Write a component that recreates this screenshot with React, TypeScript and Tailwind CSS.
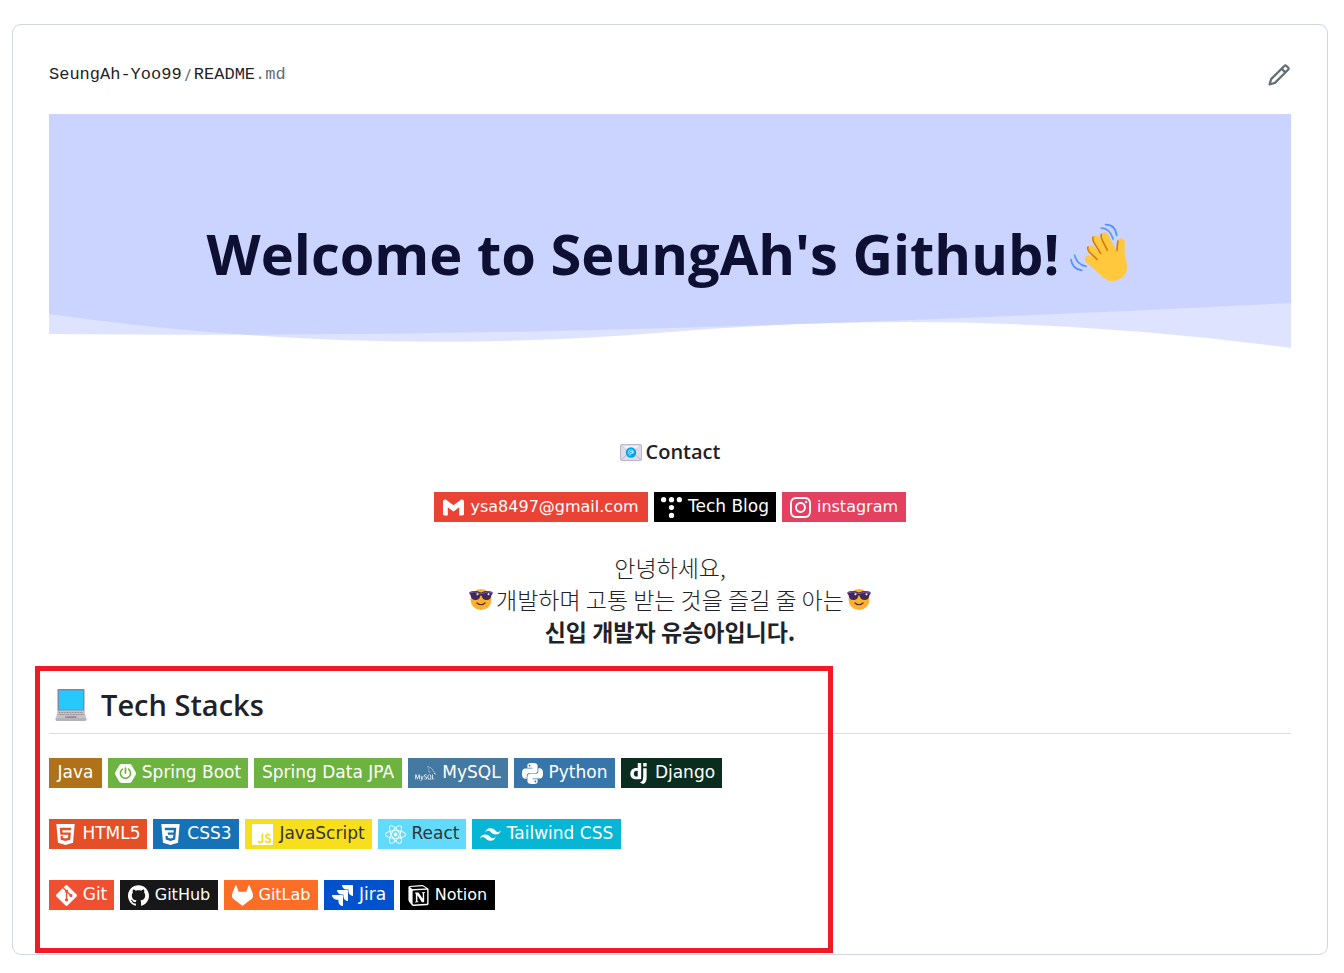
import type { ReactNode } from "react";
import {
  SiDjango,
  SiGit,
  SiGithub,
  SiGitlab,
  SiGmail,
  SiHtml5,
  SiInstagram,
  SiJavascript,
  SiJira,
  SiMysql,
  SiNotion,
  SiPython,
  SiReact,
  SiSpringboot,
  SiTailwindcss
} from "react-icons/si";

type BadgeItem = {
  label: string;
  href: string;
  style: string;
  icon?: ReactNode;
};

const contacts: BadgeItem[] = [
  { label: "ysa8497@gmail.com", href: "mailto:ysa8497@gmail.com", style: "w-[214px] bg-[#ea4335] text-base text-white", icon: <SiGmail /> },
  { label: "Tech Blog", href: "#blog", style: "w-[122px] bg-black text-[17px] text-white", icon: <TistoryIcon /> },
  { label: "instagram", href: "#instagram", style: "w-[124px] bg-[#e4405f] text-base text-white", icon: <SiInstagram /> }
];

const stacks: BadgeItem[][] = [
  [
    { label: "Java", href: "#java", style: "w-[53px] bg-[#b07219] text-[17px] text-white" },
    { label: "Spring Boot", href: "#spring-boot", style: "w-[140px] bg-[#6db33f] text-[17px] text-white", icon: <SiSpringboot /> },
    { label: "Spring Data JPA", href: "#jpa", style: "w-[148px] bg-[#6db33f] text-[17px] text-white" },
    { label: "MySQL", href: "#mysql", style: "w-[100px] bg-[#4479a1] text-[17px] text-white", icon: <SiMysql /> },
    { label: "Python", href: "#python", style: "w-[101px] bg-[#3776ab] text-[17px] text-white", icon: <SiPython /> },
    { label: "Django", href: "#django", style: "w-[101px] bg-[#092e20] text-[17px] text-white", icon: <SiDjango /> }
  ],
  [
    { label: "HTML5", href: "#html5", style: "w-[98px] bg-[#e34f26] text-[17px] text-white", icon: <SiHtml5 /> },
    { label: "CSS3", href: "#css3", style: "w-[86px] bg-[#1572b6] text-[17px] text-white", icon: <Css3Icon /> },
    { label: "JavaScript", href: "#javascript", style: "w-[127px] bg-[#f7df1e] text-[17px] text-[#333333]", icon: <SiJavascript /> },
    { label: "React", href: "#react", style: "w-[88px] bg-[#61dafb] text-[17px] text-[#333333]", icon: <SiReact /> },
    { label: "Tailwind CSS", href: "#tailwind", style: "w-[149px] bg-[#06b6d4] text-[17px] text-white", icon: <SiTailwindcss /> }
  ],
  [
    { label: "Git", href: "#git", style: "w-[65px] bg-[#f05032] text-[17px] text-white", icon: <SiGit /> },
    { label: "GitHub", href: "#github", style: "w-[98px] bg-[#181717] text-base text-white", icon: <SiGithub /> },
    { label: "GitLab", href: "#gitlab", style: "w-[94px] bg-[#fc6d26] text-base text-white", icon: <SiGitlab /> },
    { label: "Jira", href: "#jira", style: "w-[70px] bg-[#0052cc] text-[17px] text-white", icon: <SiJira /> },
    { label: "Notion", href: "#notion", style: "w-[95px] bg-black text-base text-white", icon: <SiNotion /> }
  ]
];

function PencilIcon() {
  return (
    <svg viewBox="0 0 16 16" fill="currentColor" className="size-6">
      <path d="M11.013 1.427a1.75 1.75 0 0 1 2.474 0l1.086 1.086a1.75 1.75 0 0 1 0 2.474l-8.61 8.61c-.21.21-.47.364-.756.445l-3.251.93a.75.75 0 0 1-.927-.928l.929-3.25c.081-.286.235-.547.445-.758l8.61-8.61Zm.176 4.823L9.75 4.81l-6.286 6.287a.253.253 0 0 0-.064.108l-.558 1.953 1.953-.558a.253.253 0 0 0 .108-.064Zm1.238-3.763a.25.25 0 0 0-.354 0L10.811 3.75l1.439 1.44 1.263-1.263a.25.25 0 0 0 0-.354Z" />
    </svg>
  );
}

function TistoryIcon() {
  return (
    <svg viewBox="0 0 24 24" fill="currentColor" width="1em" height="1em">
      <circle cx="3" cy="3" r="3" />
      <circle cx="12" cy="3" r="3" />
      <circle cx="21" cy="3" r="3" />
      <circle cx="12" cy="12" r="3" />
      <circle cx="12" cy="21" r="3" />
    </svg>
  );
}

function Css3Icon() {
  return (
    <svg viewBox="0 0 24 24" fill="currentColor" width="1em" height="1em">
      <path d="M1.5 0h21l-1.91 21.563L11.977 24l-8.565-2.438L1.5 0zm17.09 4.413L5.41 4.41l.213 2.622 10.125.002-.255 2.716h-6.64l.24 2.573h6.182l-.366 3.523-2.91.804-2.956-.81-.188-2.11h-2.61l.29 3.855L12 19.288l5.373-1.53L18.59 4.414z" />
    </svg>
  );
}

function WavingHand() {
  return (
    <svg viewBox="0 0 204 204" className="size-[68px]" fill="none" strokeLinecap="round">
      <g stroke="#ffc83d" strokeWidth="23">
        <path d="M150 112L119 52" />
        <path d="M130 115L94 62" />
        <path d="M112 128L79 92" />
        <path d="M105 145L71 121" />
        <path d="M167 114L168 70" />
      </g>
      <path
        d="M64 130L106 167Q122 186 143 186Q164 185 177 171Q188 157 186 136L179 106L166 100L152 112L118 92L98 102L86 120Z"
        fill="#ffc83d"
      />
      <g stroke="#d67d00" strokeWidth="5">
        <path d="M109 46Q106 54 112 64Q118 76 127 93" />
        <path d="M84 54Q82 62 87 71L107 103" />
        <path d="M69 84Q66 90 73 99L96 121" />
        <path d="M159 66Q157 75 156 94" />
      </g>
      <g stroke="#5092ff" strokeWidth="5">
        <path d="M109 27Q135 28 144 60" />
        <path d="M122 17Q151 17 155 49" />
        <path d="M29 109Q36 137 63 142" />
        <path d="M18 122Q22 150 50 154" />
      </g>
    </svg>
  );
}

function MailEmoji() {
  return (
    <svg viewBox="0 0 22 17" className="h-[17px] w-[22px]">
      <rect x=".5" y=".5" width="21" height="16" rx="1" fill="#e0dbe8" stroke="#bcb4c8" />
      <path d="M1 16L9 8.500M21 16L13 8.500" stroke="#bcb4c8" />
      <path d="M1 1L11 10L21 1Z" fill="#f3eef8" stroke="#c8c1d2" strokeWidth=".8" />
      <circle cx="11" cy="8.500" r="5.200" fill="#00a6ed" />
      <circle cx="11" cy="8.500" r="1.300" fill="none" stroke="#fff" strokeWidth=".7" />
      <path d="M12.400 7v2q.6 1 1.300-.3Q13.800 5.600 11 5.600Q8.200 5.700 8.100 8.500Q8.300 11.300 11 11.400" fill="none" stroke="#fff" strokeWidth=".6" />
    </svg>
  );
}

function CoolFace() {
  return (
    <svg viewBox="0 0 24 24" className="size-6">
      <circle cx="12" cy="12.500" r="10.500" fill="#ffb02e" />
      <path d="M.5 5Q6 3 12 5.500Q18 3 23.500 5V7L22.500 8Q22 13 17.500 13Q13.500 13 12.500 8.500H11.500Q10.500 13 6.500 13Q2 13 1.500 8L.5 7Z" fill="#402a56" />
      <path d="M.5 6Q5 3.500 11 6.500H13Q19 3.500 23.500 6" fill="none" stroke="#8b5fbf" strokeWidth=".8" />
      <circle cx="8.500" cy="7.200" r="1" fill="#fff" />
      <circle cx="19.500" cy="7.200" r="1" fill="#fff" />
      <path d="M8 16Q12 19.500 16 16" fill="none" stroke="#402a32" strokeWidth="1.200" strokeLinecap="round" />
    </svg>
  );
}

function Laptop() {
  return (
    <svg viewBox="0 0 32 32" className="size-8">
      <path d="M2.500 0H29.500V22H2.500Z" fill="#7a88ad" />
      <path d="M4 1.500H28V20.500H4Z" fill="#26c9fc" />
      <path d="M2.500 21.500H29.500L31 29H1Z" fill="#c5c3c8" />
      <path d="M4 23.500H28M3.500 25.500H28.500" stroke="#8f8d96" strokeDasharray="1 .6" />
      <path d="M10.500 27.200H21.500V29H10.500Z" fill="#8f8d96" />
      <path d="M.5 29H31.500V31Q31 32 30 32H2Q1 32 .5 31Z" fill="#b5b3b8" />
    </svg>
  );
}

function Badge({ item }: { item: BadgeItem }) {
  return (
    <a
      href={item.href}
      className={`flex h-[30px] items-center justify-center gap-1.5 font-['DejaVu_Sans',sans-serif] whitespace-nowrap ${item.style}`}
    >
      {item.icon && <span className="text-[21px] leading-none text-white">{item.icon}</span>}
      {item.label}
    </a>
  );
}

function Banner() {
  return (
    <div className="relative h-[234px]">
      <svg viewBox="0 0 1242 234" preserveAspectRatio="none" className="absolute inset-0 size-full">
        <g fill="#b1bdff" fillOpacity=".424">
          <path d="M0 0V200Q310 244 621 218T1242 234V0Z" />
          <path d="M0 0V220Q310 223 621 214T1242 189V0Z" />
        </g>
      </svg>
      <h1 className="relative flex items-center justify-center gap-1.5 pt-[99px] text-[56px] leading-[80px] font-bold whitespace-nowrap text-[#0d0f33]">
        Welcome to SeungAh's Github!
        <WavingHand />
      </h1>
    </div>
  );
}

export default function App() {
  return (
    <main className="bg-white pt-6 pr-4 pb-[18px] pl-3 font-['Open_Sans','Noto_Sans_CJK_KR',sans-serif] text-[#1f2328]">
      <article className="rounded-[9px] border border-[#d0d7de] px-9 pt-9 pb-11">
        <header className="mb-[25px] flex h-7 items-center justify-between">
          <p className="flex gap-[3px] font-['Liberation_Mono',monospace] text-[17px]">
            <a href="#profile">SeungAh-Yoo99</a>
            <span className="font-['Open_Sans',sans-serif] text-[#656d76]">/</span>
            <a href="#readme">
              README<span className="text-[#656d76]">.md</span>
            </a>
          </p>
          <button type="button" aria-label="Edit" className="text-[#656d76]">
            <PencilIcon />
          </button>
        </header>

        <Banner />

        <h3 className="mt-[92px] flex items-center justify-center gap-1 text-xl leading-6 font-semibold">
          <MailEmoji />
          Contact
        </h3>
        <div className="mt-7 flex justify-center gap-1.5">
          {contacts.map((item) => (
            <Badge key={item.label} item={item} />
          ))}
        </div>

        <div className="mt-[29px] text-center font-['Noto_Sans_CJK_KR',sans-serif] text-[23px] leading-8 font-light">
          <p>안녕하세요,</p>
          <p className="flex items-center justify-center gap-[3px]">
            <CoolFace />
            개발하며 고통 받는 것을 즐길 줄 아는
            <CoolFace />
          </p>
          <p className="font-bold">신입 개발자 유승아입니다.</p>
        </div>

        <section className="relative mt-[38px]">
          <h2 className="flex items-center gap-3.5 border-b border-[#d8dee4] pb-2 pl-1.5 text-[29px] leading-10 font-semibold">
            <Laptop />
            Tech Stacks
          </h2>
          <div className="mt-6 flex flex-col gap-[31px]">
            {stacks.map((row) => (
              <div key={row[0].label} className="flex gap-1.5">
                {row.map((item) => (
                  <Badge key={item.label} item={item} />
                ))}
              </div>
            ))}
          </div>
          <div className="pointer-events-none absolute -top-[19px] -bottom-[43px] -left-3.5 w-[798px] border-[5px] border-[#ed1c24]" />
        </section>
      </article>
    </main>
  );
}
